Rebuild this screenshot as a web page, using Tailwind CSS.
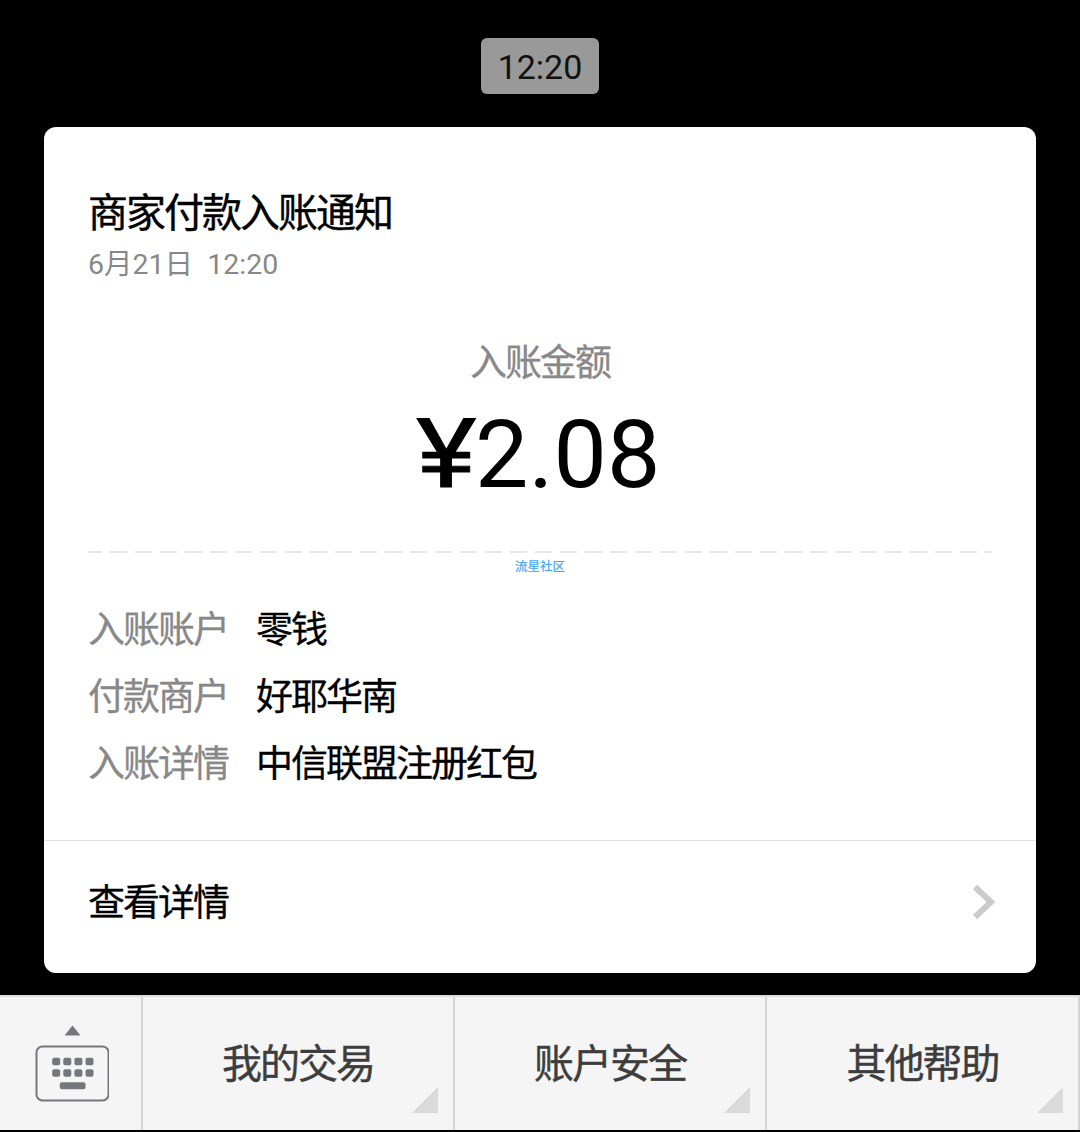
<!DOCTYPE html>
<html lang="zh">
  <head>
    <meta charset="UTF-8" />
    <title>商家付款入账通知</title>
    <script src="https://cdn.jsdelivr.net/npm/@tailwindcss/browser@4"></script>
  </head>
  <body class="bg-black font-['Roboto','Noto_Sans_CJK_SC',sans-serif]">
    <div class="w-[1080px] h-[1132px] flex flex-col overflow-hidden">
      <!-- 时间 -->
      <div class="h-[127px] pt-[38px] flex justify-center shrink-0">
        <div class="w-[118px] h-[56px] rounded-[6px] bg-[#999999] text-[#111111] text-[34px] leading-[58px] text-center">12:20</div>
      </div>

      <!-- 通知卡片 -->
      <div class="mx-[44px] h-[846px] bg-white rounded-[12px] flex flex-col shrink-0">
        <div class="px-[44px] pt-[65px]">
          <h2 class="text-[40px] tracking-[-2px] leading-[44px] text-black [-webkit-text-stroke:0.4px_#000]">商家付款入账通知</h2>
          <p class="text-[28.5px] leading-[40px] text-[#888888] mt-[9px]">6月21日&nbsp; 12:20</p>
        </div>

        <div class="text-center mt-[57px]">
          <p class="text-[37px] tracking-[-2px] leading-[44px] text-[#888888] [-webkit-text-stroke:0.3px_#888888]">入账金额</p>
          <p class="text-[95px] leading-[108px] text-black mt-[14px]"><span class="inline-block text-[96px] scale-x-[1.2] ml-[1px] mr-[4px] [-webkit-text-stroke:0.8px_#000]">¥</span>2.08</p>
        </div>

        <div class="mx-[44px] mt-[42px] h-[2px] bg-[repeating-linear-gradient(90deg,#e8e8e8_0,#e8e8e8_14px,transparent_14px,transparent_22px,#e8e8e8_22px,#e8e8e8_25px)]"></div>
        <p class="text-center text-[12.5px] leading-[16px] text-[#3ea6f5] mt-[6px] [-webkit-text-stroke:0.2px_#3ea6f5]">流星社区</p>

        <div class="px-[44px] mt-[34px] flex flex-col gap-[23px] text-[37px] tracking-[-2px] leading-[44px]">
          <div class="flex"><span class="w-[168px] text-[#888888] [-webkit-text-stroke:0.3px_#888888]">入账账户</span><span class="text-black [-webkit-text-stroke:0.3px_#000]">零钱</span></div>
          <div class="flex"><span class="w-[168px] text-[#888888] [-webkit-text-stroke:0.3px_#888888]">付款商户</span><span class="text-black [-webkit-text-stroke:0.3px_#000]">好耶华南</span></div>
          <div class="flex"><span class="w-[168px] text-[#888888] [-webkit-text-stroke:0.3px_#888888]">入账详情</span><span class="text-black [-webkit-text-stroke:0.3px_#000]">中信联盟注册红包</span></div>
        </div>

        <div class="mt-[53px] border-t border-[#e0e0e0] flex-1 px-[44px] pb-[6px] flex items-center justify-between">
          <span class="text-[37px] tracking-[-2px] leading-[44px] text-black [-webkit-text-stroke:0.3px_#000]">查看详情</span>
          <svg class="w-[24px] h-[36px] mr-[-4px] mb-[5px]" viewBox="0 0 24 36">
            <path d="M3 3 L19 18 L3 33" fill="none" stroke="#cbcbcf" stroke-width="6" />
          </svg>
        </div>
      </div>

      <!-- 底部菜单 -->
      <div class="mt-[22px] h-[135px] bg-[#f5f5f5] border-t-2 border-[#dcdcdc] flex shrink-0">
        <div class="w-[143px] flex items-center justify-center border-r-2 border-[#d4d4d4]">
          <svg class="w-[76px] h-[78px]" viewBox="0 0 76 78" fill="#74777c">
            <path d="M39.5 0.5 L47.5 10.5 L31.5 10.5 Z" />
            <rect x="3.5" y="21.5" width="72" height="54" rx="6" fill="none" stroke="#74777c" stroke-width="2" />
            <rect x="19.2" y="32.8" width="8" height="7.5" rx="2" />
            <rect x="30.3" y="32.8" width="8" height="7.5" rx="2" />
            <rect x="41.4" y="32.8" width="8" height="7.5" rx="2" />
            <rect x="52.5" y="32.8" width="8" height="7.5" rx="2" />
            <rect x="19.2" y="44.2" width="8" height="7.5" rx="2" />
            <rect x="30.3" y="44.2" width="8" height="7.5" rx="2" />
            <rect x="41.4" y="44.2" width="8" height="7.5" rx="2" />
            <rect x="52.5" y="44.2" width="8" height="7.5" rx="2" />
            <rect x="26.8" y="57.2" width="25.7" height="7" rx="2" />
          </svg>
        </div>
        <div class="relative w-[312px] pt-[3px] flex items-center justify-center border-r-2 border-[#d4d4d4] text-[40px] tracking-[-2px] text-[#3d3d3d] [-webkit-text-stroke:0.4px_#3d3d3d]">
          我的交易
          <svg class="absolute right-[15px] bottom-[17px] w-[26px] h-[26px]" viewBox="0 0 27 27"><path d="M27 0 V27 H0 Z" fill="#dadada" /></svg>
        </div>
        <div class="relative w-[312px] pt-[3px] flex items-center justify-center border-r-2 border-[#d4d4d4] text-[40px] tracking-[-2px] text-[#3d3d3d] [-webkit-text-stroke:0.4px_#3d3d3d]">
          账户安全
          <svg class="absolute right-[15px] bottom-[17px] w-[26px] h-[26px]" viewBox="0 0 27 27"><path d="M27 0 V27 H0 Z" fill="#dadada" /></svg>
        </div>
        <div class="relative w-[313px] pt-[3px] flex items-center justify-center border-r-2 border-[#d4d4d4] text-[40px] tracking-[-2px] text-[#3d3d3d] [-webkit-text-stroke:0.4px_#3d3d3d]">
          其他帮助
          <svg class="absolute right-[15px] bottom-[17px] w-[26px] h-[26px]" viewBox="0 0 27 27"><path d="M27 0 V27 H0 Z" fill="#dadada" /></svg>
        </div>
      </div>
    </div>
  </body>
</html>
